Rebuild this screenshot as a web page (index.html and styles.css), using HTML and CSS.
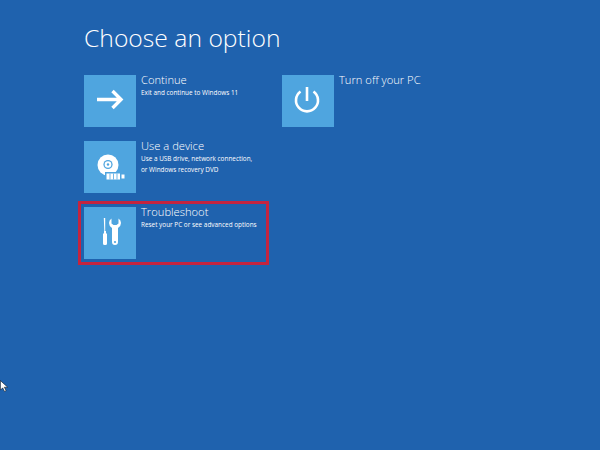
FILE: index.html
```html
<!DOCTYPE html>
<html lang="en">
<head>
<meta charset="utf-8">
<title>Choose an option</title>
<link rel="stylesheet" href="styles.css">
</head>
<body>
<main class="screen">
  <h1 class="heading">Choose an option</h1>
  <div class="options">
    <div class="column">
      <div class="option">
        <div class="tile">
          <svg viewBox="0 0 52 52" class="icon"><path d="M13 24.500H37M28.500 16L37 24.500L28.500 33" fill="none" stroke="#fff" stroke-width="3.400"/></svg>
        </div>
        <div class="label"><div class="title">Continue</div><div class="desc">Exit and continue to Windows 11</div></div>
      </div>
      <div class="option">
        <div class="tile">
          <svg viewBox="0 0 52 52" class="icon">
            <circle cx="24" cy="24" r="10.500" fill="#fff"/>
            <circle cx="24" cy="23.500" r="4.600" fill="#4fa5df"/>
            <circle cx="24" cy="23.500" r="3.300" fill="#fff"/>
            <circle cx="24" cy="23.500" r="1.200" fill="#4fa5df"/>
            <rect x="21" y="31" width="20" height="8.500" fill="#4fa5df"/>
            <rect x="22.500" y="32.500" width="13.500" height="6" fill="#fff"/>
            <path d="M26 32.500v6M29.500 32.500v6M33 32.500v6" stroke="#4fa5df" stroke-width=".8"/>
            <rect x="37.500" y="33.500" width="3" height="4" fill="#fff"/>
          </svg>
        </div>
        <div class="label"><div class="title">Use a device</div><div class="desc">Use a USB drive, network connection,<br>or Windows recovery DVD</div></div>
      </div>
      <div class="option selected">
        <div class="tile">
          <svg viewBox="0 0 52 52" class="icon">
            <path d="M19.800 11h1.400v13h.8v2.500h1V36.500q0 1.500-1.500 1.500h-1q-1.500 0-1.500-1.500V26.500h1V24h.3z" fill="#fff"/>
            <path d="M27.500 11.500q-2.500 1.500-2.500 4.500 0 3 3 5V35a3 3 0 0 0 6 0V21q3-2 3-5 0-3-2.500-4.500v5l-2 1.500h-3l-2-1.500z" fill="#fff"/>
            <circle cx="31" cy="35" r="1.100" fill="#4fa5df"/>
          </svg>
        </div>
        <div class="label"><div class="title">Troubleshoot</div><div class="desc">Reset your PC or see advanced options</div></div>
      </div>
    </div>
    <div class="column">
      <div class="option">
        <div class="tile">
          <svg viewBox="0 0 52 52" class="icon"><path d="M18.500 16.500a11 11 0 1 0 13 0" fill="none" stroke="#fff" stroke-width="2.600"/><path d="M25 12V26" fill="none" stroke="#fff" stroke-width="2.600"/></svg>
        </div>
        <div class="label"><div class="title">Turn off your PC</div></div>
      </div>
    </div>
  </div>
  <svg class="cursor" viewBox="0 0 10 14"><path d="M.5.500V11l2.500-2.500 2 4 1.800-.9-2-3.800H8.500z" fill="#fff" stroke="#111" stroke-width=".6"/></svg>
</main>
</body>
</html>
```
FILE: styles.css
```css
html, body { margin: 0; padding: 0; }
body { background: #1f62ae; }
.screen {
  position: relative;
  width: 600px;
  height: 450px;
  box-sizing: border-box;
  padding: 20px 0 0 84px;
  background: #1f62ae;
  color: #fff;
  font-family: "Open Sans", "Liberation Sans", sans-serif;
  overflow: hidden;
}
.heading {
  margin: 0 0 19px;
  font-size: 24.700px;
  line-height: 36px;
  font-weight: 300;
}
.options { display: flex; gap: 19px; }
.column { display: flex; flex-direction: column; gap: 14px; width: 179px; }
.option { display: flex; gap: 5px; height: 52px; }
.selected { outline: 3px solid #c4243f; outline-offset: 3px; }
.tile { width: 52px; height: 52px; background: #4fa5df; flex: none; }
.icon { display: block; width: 52px; height: 52px; }
.label { min-width: 0; margin-top: -2px; }
.title { font-size: 11.200px; line-height: 13px; font-weight: 300; white-space: nowrap; }
.desc { font-size: 6.400px; line-height: 10.500px; margin-top: 2px; white-space: nowrap; }
.cursor { position: absolute; left: 0; top: 380px; width: 9px; height: 13px; }
```
